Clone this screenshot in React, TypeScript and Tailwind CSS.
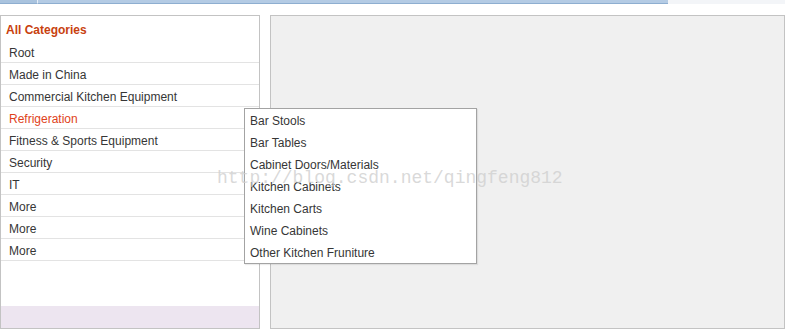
import React from 'react';

// --- Data ---
const CATEGORIES = [
  'Root',
  'Made in China',
  'Commercial Kitchen Equipment',
  'Refrigeration',
  'Fitness & Sports Equipment',
  'Security',
  'IT',
  'More',
  'More',
  'More',
];

const SUB_ITEMS = [
  'Bar Stools',
  'Bar Tables',
  'Cabinet Doors/Materials',
  'Kitchen Cabinets',
  'Kitchen Carts',
  'Wine Cabinets',
  'Other Kitchen Fruniture',
];

const ACTIVE = 'Refrigeration';

// --- Main Component ---
export default function App() {
  return (
    <div className="relative w-[785px] h-[334px] bg-white overflow-hidden font-['Liberation_Sans',Arial,sans-serif] text-[12px] text-[#363636]">
      {/* Browser chrome strip */}
      <div className="flex h-[4px]">
        <div className="w-[37px] bg-[#a9c3de] border-b border-[#8eaed0]" />
        <div className="w-[631px] bg-[#b4cbe4] border-b border-[#8eaed0] border-l border-l-[#e6eef7]" />
        <div className="flex-1 bg-[#f3f5f8]" />
      </div>

      <div className="flex gap-[10px] pt-[11px]">
        {/* Category sidebar */}
        <div className="w-[260px] h-[314px] flex flex-col border border-[#c3c3c3] bg-white">
          <div className="h-[25px] pl-[5px] pt-[3px] flex items-center font-bold text-[#c8410f]">All Categories</div>
          {CATEGORIES.map((cat, i) => (
            <div
              key={i}
              className={`h-[22px] pl-[8px] pt-[2px] flex items-center border-b border-[#e3e3e3] ${
                cat === ACTIVE ? 'text-[#e0421b]' : ''
              }`}
            >
              {cat}
            </div>
          ))}
          <div className="flex-1" />
          <div className="h-[22px] bg-[#ede5f0]" />
        </div>

        {/* Content area */}
        <div className="w-[515px] h-[314px] bg-[#f0f0f0] border border-[#c3c3c3]" />
      </div>

      {/* Flyout submenu */}
      <div className="absolute left-[244px] top-[108px] w-[233px] h-[156px] bg-white border border-[#a3a3a3] shadow-[1px_1px_1px_rgba(0,0,0,0.08)]">
        {SUB_ITEMS.map(item => (
          <div key={item} className="h-[22px] pl-[5px] pt-[2px] flex items-center">
            {item}
          </div>
        ))}
      </div>

      {/* Watermark */}
      <div className="absolute left-[217px] top-[167px] font-['Liberation_Mono','Courier_New',monospace] text-[18px] leading-[22px] text-[#cfcfcf]/80 pointer-events-none">
        http://blog.csdn.net/qingfeng812
      </div>
    </div>
  );
}
